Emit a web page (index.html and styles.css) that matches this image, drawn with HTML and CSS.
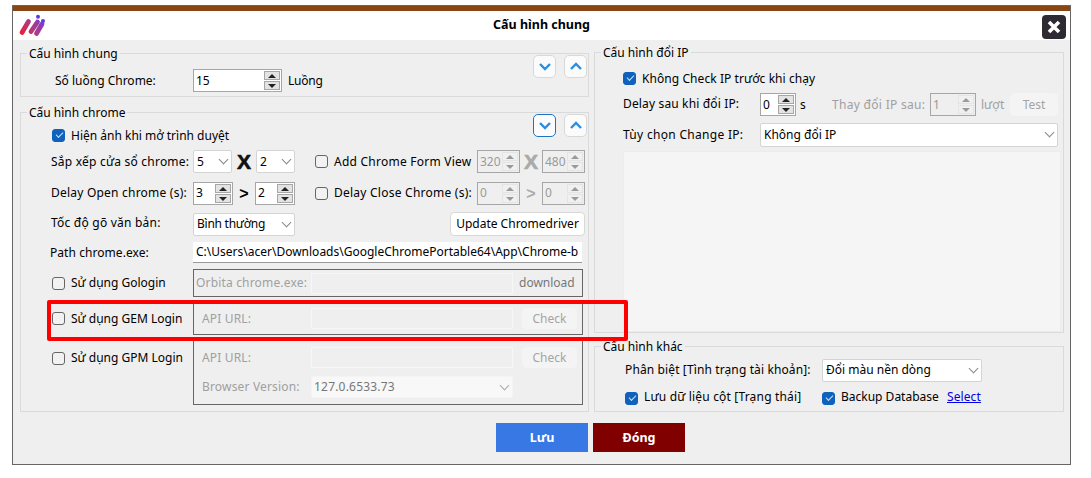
FILE: index.html
```html
<!DOCTYPE html>
<html lang="vi">
<head>
<meta charset="utf-8">
<title>Cấu hình chung</title>
<link rel="stylesheet" href="styles.css">
</head>
<body>
<div class="window">
  <div class="topbar"></div>
  <header class="header">
    <svg class="logo" width="30" height="24" viewBox="0 0 30 24">
      <defs><linearGradient id="g" gradientUnits="userSpaceOnUse" x1="3" y1="20" x2="25" y2="6"><stop offset="0" stop-color="#ea1f3a"/><stop offset=".5" stop-color="#b03a80"/><stop offset="1" stop-color="#7a3cd0"/></linearGradient></defs>
      <g stroke="url(#g)" stroke-width="4.800" stroke-linecap="round" fill="none">
        <path d="M4 18.500 L10.500 7.500"/>
        <path d="M13 17.500 L19.500 8"/>
        <path d="M18.500 19.500 L24 10"/>
      </g>
      <circle cx="20" cy="2.700" r="2" fill="#5a3ce0"/>
      <circle cx="25" cy="7" r="2" fill="#5a3ce0"/>
    </svg>
    <div class="title">Cấu hình chung</div>
    <div class="close"><svg width="14" height="14" viewBox="0 0 14 14"><path d="M2 2 L12 12 M12 2 L2 12" stroke="#fff" stroke-width="3.600"/></svg></div>
  </header>
  <main class="content">
    <div class="col">
      <fieldset class="group group-a">
        <legend>Cấu hình chung</legend>
        <div class="fold"><button class="fbtn"><svg width="14" height="9" viewBox="0 0 14 9"><path d="M2 2 L7 7 L12 2"/></svg></button><button class="fbtn"><svg width="14" height="9" viewBox="0 0 14 9"><path d="M2 7 L7 2 L12 7"/></svg></button></div>
        <div class="row row-count">
          <span class="lbl-count">Số luồng Chrome:</span>
          <div class="spin w89"><span class="val">15</span><span class="arrows"><i class="up"></i><i class="dn"></i></span></div>
          <span class="unit">Luồng</span>
        </div>
      </fieldset>
      <fieldset class="group group-b">
        <legend>Cấu hình chrome</legend>
        <div class="fold"><button class="fbtn focus"><svg width="14" height="9" viewBox="0 0 14 9"><path d="M2 2 L7 7 L12 2"/></svg></button><button class="fbtn"><svg width="14" height="9" viewBox="0 0 14 9"><path d="M2 7 L7 2 L12 7"/></svg></button></div>
        <div class="row r1"><span class="chk on"></span><span class="drop">Hiện ảnh khi mở trình duyệt</span></div>
        <div class="row r2">
          <span class="lbl">Sắp xếp cửa sổ chrome:</span>
          <div class="sel w39"><span>5</span></div><b class="bigx">X</b><div class="sel w39"><span>2</span></div>
          <span class="chk ml20"></span><span class="lbl-add">Add Chrome Form View</span>
          <div class="spin off w43"><span class="val">320</span><span class="arrows"><i class="up"></i><i class="dn"></i></span></div><b class="bigx off wx22">X</b>
          <div class="spin off w43"><span class="val">480</span><span class="arrows"><i class="up"></i><i class="dn"></i></span></div>
        </div>
        <div class="row r3">
          <span class="lbl">Delay Open chrome (s):</span>
          <div class="spin w40"><span class="val">3</span><span class="arrows"><i class="up"></i><i class="dn"></i></span></div><b class="gt">&gt;</b>
          <div class="spin w40"><span class="val">2</span><span class="arrows"><i class="up"></i><i class="dn"></i></span></div>
          <span class="chk ml20"></span><span class="lbl-add">Delay Close Chrome (s):</span>
          <div class="spin off w43"><span class="val">0</span><span class="arrows"><i class="up"></i><i class="dn"></i></span></div><b class="gt off">&gt;</b>
          <div class="spin off w43"><span class="val">0</span><span class="arrows"><i class="up"></i><i class="dn"></i></span></div>
        </div>
        <div class="row r4">
          <span class="lbl">Tốc độ gõ văn bản:</span>
          <div class="sel w102"><span class="tight-text">Bình thường</span></div>
          <div class="btn update">Update Chromedriver</div>
        </div>
        <div class="row r5">
          <span class="lbl lbl-path">Path chrome.exe:</span>
          <div class="path">C:\Users\acer\Downloads\GoogleChromePortable64\App\Chrome-b</div>
        </div>
        <div class="row r6">
          <div class="opt"><span class="chk"></span><span>Sử dụng Gologin</span></div>
          <div class="sub sub-go">
            <span class="sub-lbl tight">Orbita chrome.exe:</span><div class="dis-input"></div><span class="dl">download</span>
          </div>
        </div>
        <div class="row r7">
          <div class="opt"><span class="chk"></span><span>Sử dụng GEM Login</span></div>
          <div class="sub sub-gem">
            <span class="sub-lbl">API URL:</span><div class="dis-input"></div><div class="btn dis check">Check</div>
          </div>
        </div>
        <div class="row r8">
          <div class="opt opt-top"><span class="chk"></span><span>Sử dụng GPM Login</span></div>
          <div class="sub sub-gpm">
            <div class="sub-row"><span class="sub-lbl">API URL:</span><div class="dis-input"></div><div class="btn dis check">Check</div></div>
            <div class="sub-row sub-row2"><span class="sub-lbl">Browser Version:</span><div class="sel off w202"><span>127.0.6533.73</span></div></div>
          </div>
        </div>
      </fieldset>
    </div>
    <div class="col col-right">
      <fieldset class="group group-c">
        <legend>Cấu hình đổi IP</legend>
        <div class="row c1"><span class="chk on"></span><span class="drop">Không Check IP trước khi chạy</span></div>
        <div class="row c2">
          <span class="lbl-ip">Delay sau khi đổi IP:</span>
          <div class="spin w36"><span class="val">0</span><span class="arrows"><i class="up"></i><i class="dn"></i></span></div>
          <span class="s">s</span>
          <span class="dim change">Thay đổi IP sau:</span>
          <div class="spin off w46"><span class="val">1</span><span class="arrows"><i class="up"></i><i class="dn"></i></span></div>
          <span class="dim luot">lượt</span>
          <div class="btn dis test">Test</div>
        </div>
        <div class="row c3">
          <span class="lbl-ip">Tùy chọn Change IP:</span>
          <div class="sel w298"><span>Không đổi IP</span></div>
        </div>
        <div class="panel"></div>
      </fieldset>
      <fieldset class="group group-d">
        <legend>Cấu hình khác</legend>
        <div class="row d1">
          <span class="lbl-diff">Phân biệt [Tình trạng tài khoản]:</span>
          <div class="sel w160"><span class="lift">Đổi màu nền dòng</span></div>
        </div>
        <div class="row d2">
          <span class="chk on"></span><span class="lbl-col">Lưu dữ liệu cột [Trạng thái]</span>
          <span class="chk on"></span><span class="lbl-bk">Backup Database</span>
          <a class="link" href="#">Select</a>
        </div>
      </fieldset>
    </div>
  </main>
  <footer class="footer">
    <div class="act blue">Lưu</div>
    <div class="act dark">Đóng</div>
  </footer>
  <div class="highlight"></div>
</div>
</body>
</html>
```
FILE: styles.css
```css
* { box-sizing: border-box; }
html, body { margin: 0; padding: 0; background: #fff; }
body {
  padding: 5px 0 0 12px;
  font: 12px/14px "Noto Sans", "Noto Sans CJK SC", sans-serif;
  color: #000;
}
.window {
  position: relative;
  width: 1059px;
  height: 460px;
  border: 1px solid #666;
  background: #efefef;
}
.topbar { height: 5px; background: #8b4513; }
.header {
  height: 29px;
  background: #fff;
  display: grid;
  grid-template-columns: 1fr auto 1fr;
  align-items: center;
}
.logo { margin-left: 5px; }
.title { font-weight: 700; font-size: 12.5px; margin-bottom: 2px; }
.close {
  justify-self: end;
  width: 24px;
  height: 24px;
  margin-right: 4px;
  margin-top: 3px;
  border-radius: 4px;
  background: #2e2a33;
  display: flex;
  align-items: center;
  justify-content: center;
}
.content {
  display: grid;
  grid-template-columns: 569px 470px;
  column-gap: 5px;
  padding: 6px 0 0 7px;
  height: 372px;
}
.col { display: flex; flex-direction: column; gap: 8px; min-width: 0; }
.col-right { gap: 6px; }
.group {
  position: relative;
  margin: 0;
  padding: 0;
  min-width: 0;
  border: 1px solid #dadada;
}
.group legend { margin-left: 6px; padding: 1px 2px 0; line-height: 14px; }
.row { display: flex; align-items: center; }
.drop { padding-top: 2px; }
.lift { padding-bottom: 2px; }
.fold { position: absolute; top: -6px; right: 1px; display: flex; gap: 8px; }
.fbtn {
  width: 23px;
  height: 23px;
  padding: 0;
  border: 1px solid #d8d8d8;
  border-radius: 5px;
  background: #fbfbfb;
  display: flex;
  align-items: center;
  justify-content: center;
}
.fbtn.focus { border-color: #1f73c4; }
.fbtn path { fill: none; stroke: #2b8ee0; stroke-width: 2.4; }

/* Controls */
.chk {
  flex: none;
  width: 13px;
  height: 13px;
  margin-right: 6px;
  border: 1px solid #666;
  border-radius: 3px;
  background: #f2f2f2;
  position: relative;
}
.chk.on { background: #0f62bb; border-color: #0f62bb; }
.chk.on::after {
  content: "";
  position: absolute;
  left: 3px;
  top: 2px;
  width: 6px;
  height: 3px;
  border-left: 1px solid #cfe2f5;
  border-bottom: 1px solid #cfe2f5;
  transform: rotate(-45deg);
}
.ml20 { margin-left: 20px; }
.sel {
  flex: none;
  height: 23px;
  padding-left: 3px;
  display: flex;
  align-items: center;
  position: relative;
  background: #fff;
  border: 1px solid #d4d4d4;
  border-radius: 2px;
}
.sel::after {
  content: "";
  position: absolute;
  right: 4px;
  top: 5px;
  width: 6px;
  height: 6px;
  border-right: 1px solid #888;
  border-bottom: 1px solid #888;
  transform: rotate(45deg);
}
.sel.off { background: #f8f8f8; border-color: #f4f4f4; color: #777; height: 22px; padding-left: 2px; letter-spacing: .2px; }
.sel.off::after { border-color: #aaa; }
.tight-text { letter-spacing: -.25px; }
.w39 { width: 39px; }
.w102 { width: 102px; }
.w160 { width: 160px; }
.w202 { width: 202px; }
.w298 { width: 298px; }
.spin {
  flex: none;
  height: 23px;
  padding-left: 1px;
  display: flex;
  justify-content: space-between;
  align-items: center;
  background: #fff;
  border: 1px solid #a6a6a6;
}
.w36 { width: 36px; }
.w40 { width: 40px; }
.w43 { width: 43px; }
.w46 { width: 46px; }
.w89 { width: 89px; }
.spin .val { padding-left: 1px; }
.spin.off { background: transparent; color: #9a9a9a; }
.arrows {
  width: 16px;
  height: 19px;
  margin-right: 1px;
  display: flex;
  flex-direction: column;
  gap: 1px;
}
.arrows i {
  flex: 1;
  position: relative;
  background: #e3e3e3;
  border: 1px solid #a6a6a6;
}
.arrows i::after {
  content: "";
  position: absolute;
  left: 3px;
  top: 2px;
  border-left: 4px solid transparent;
  border-right: 4px solid transparent;
}
.arrows .up::after { border-bottom: 4px solid #222; }
.arrows .dn::after { border-top: 4px solid #222; }
.spin.off .arrows i { background: #f0f0f0; border-color: #e4e4e4; }
.spin.off .up::after { border-bottom-color: #9a9a9a; }
.spin.off .dn::after { border-top-color: #9a9a9a; }
.bigx {
  flex: none;
  width: 24px;
  text-align: center;
  font: 900 21px/20px "Liberation Sans", sans-serif;
  -webkit-text-stroke: .6px #111;
  color: #111;
}
.bigx.off { color: #aaa; -webkit-text-stroke-color: #aaa; }
.wx22 { width: 22px; }
.gt {
  flex: none;
  width: 22px;
  text-align: center;
  font: 700 16px/20px "Liberation Sans", sans-serif;
}
.gt.off { color: #aaa; }
.btn {
  flex: none;
  display: flex;
  align-items: center;
  justify-content: center;
  background: #fff;
  border: 1px solid #d8d8d8;
  border-radius: 4px;
}
.btn.dis { background: #f4f4f4; border-color: #f4f4f4; color: #a4a4a4; }

/* Left group contents */
.group-a { height: 51px; }
.row-count { margin-top: 8px; padding-left: 34px; }
.lbl-count { width: 138px; padding-top: 1px; }
.unit { margin-left: 6px; letter-spacing: -.2px; }
.r1 { margin-top: 5px; height: 20px; padding-left: 31px; }
.r2, .r3, .r4, .r5 { padding-left: 30px; }
.r2 { margin-top: 5px; }
.r3 { margin-top: 9px; }
.r4 { margin-top: 7px; }
.r5 { margin-top: 6px; }
.r6, .r7, .r8 { padding-left: 31px; }
.r6 { margin-top: 6px; }
.r7 { margin-top: 5px; }
.r8 { margin-top: 5px; align-items: flex-start; margin-bottom: 6px; }
.lbl { flex: none; width: 142px; letter-spacing: .22px; }
.r3 .lbl, .r4 .lbl, .r3 .lbl-add { margin-bottom: 2px; }
.r3 .val { margin-bottom: 2px; }
.lbl-path { position: relative; left: -1px; letter-spacing: .06px; }
.lbl-add { flex: none; width: 143px; letter-spacing: .24px; }
.update { width: 135px; height: 24px; margin-left: 155px; }
.path {
  width: 389px;
  height: 21px;
  padding-left: 3px;
  background: #fff;
  border-bottom: 1px solid #9a9a9a;
  line-height: 20px;
  white-space: nowrap;
}
.opt { flex: none; width: 141px; display: flex; align-items: center; }
.opt-top { margin-top: 10px; padding-top: 1px; }
.sub {
  flex: none;
  width: 390px;
  border: 1px solid #666;
}
.sub-go, .sub-gem { display: flex; align-items: center; }
.sub-go { height: 28px; }
.sub-gem { height: 33px; }
.sub-gpm { height: 65px; padding-top: 6px; }
.sub-row { display: flex; align-items: center; }
.sub-row2 { margin-top: 8px; }
.sub-lbl { flex: none; width: 117px; padding-left: 8px; color: #a0a0a0; letter-spacing: .17px; }
.sub-lbl.tight { padding-left: 2px; }
.dis-input {
  flex: none;
  width: 202px;
  height: 21px;
  background: #efefef;
  border: 1px solid #f7f7f7;
}
.dl { margin-left: 6px; color: #777; }
.check { width: 55px; height: 21px; margin-left: 9px; }

/* Right group contents */
.group-c { margin-top: -1px; display: flex; flex-direction: column; height: 288px; }
.c1 { margin-top: 8px; height: 20px; padding-left: 28px; letter-spacing: .07px; }
.c2 { margin-top: 5px; padding-left: 28px; }
.c3 { margin-top: 7px; padding-left: 28px; }
.lbl-ip { flex: none; width: 137px; letter-spacing: .15px; }
.c3 .lbl-ip { letter-spacing: .3px; }
.c2 .lbl-ip { margin-bottom: 2px; }
.s { margin-left: 4px; width: 32px; }
.dim { color: #a0a0a0; }
.change { width: 98px; flex: none; letter-spacing: .3px; }
.luot { margin-left: 5px; width: 29px; flex: none; }
.test { width: 48px; height: 23px; }
.c3 .sel { height: 24px; }
.panel {
  height: 181px;
  margin: 4px 2px 0 28px;
  background: #f5f5f5;
  border: 1px solid #ececec;
}
.group-d { flex: 1; }
.d1 { margin-top: 5px; padding-left: 30px; }
.lbl-diff { flex: none; width: 197px; letter-spacing: .12px; margin-bottom: 2px; }
.d2 { margin-top: 6px; height: 20px; padding-left: 30px; }
.lbl-col { flex: none; width: 178px; letter-spacing: .18px; margin-bottom: 2px; }
.lbl-bk { flex: none; width: 106px; margin-bottom: 2px; }
.link { color: #0000ee; text-decoration: underline; margin-bottom: 2px; letter-spacing: .1px; }

/* Footer */
.footer {
  display: flex;
  gap: 5px;
  padding-left: 483px;
  margin-top: 11px;
}
.act {
  width: 92px;
  height: 29px;
  display: flex;
  align-items: center;
  justify-content: center;
  color: #fff;
  font-weight: 700;
  font-size: 12.5px;
}
.blue { background: #3878e4; }
.dark { background: #800000; }

.highlight {
  position: absolute;
  left: 34px;
  top: 294px;
  width: 581px;
  height: 41px;
  border: 4px solid #f00;
  border-radius: 2px;
  pointer-events: none;
}
```
